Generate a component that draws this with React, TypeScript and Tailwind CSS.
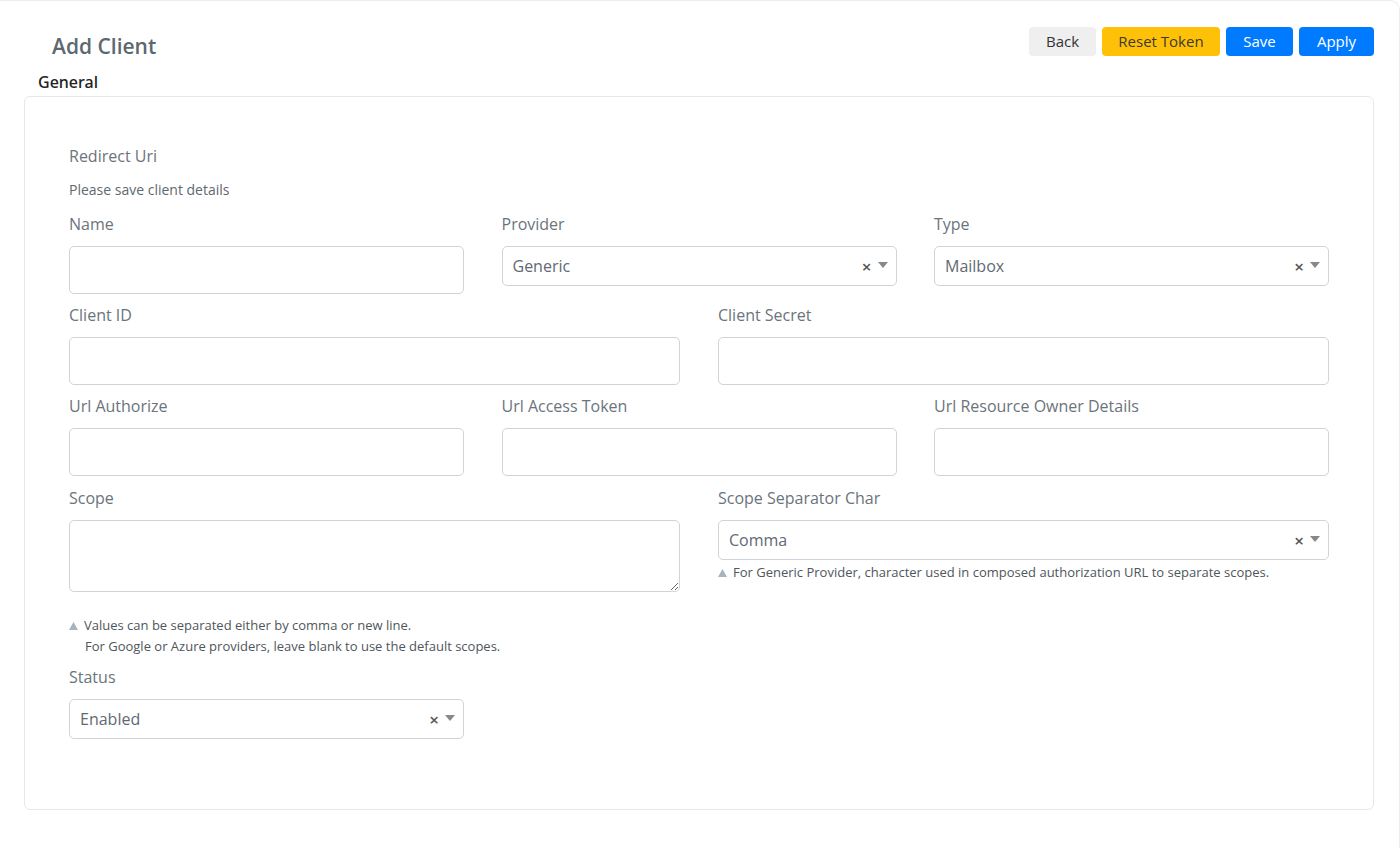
import React from "react";

const font = { fontFamily: '"Open Sans", "Noto Sans", sans-serif' };

function Label({ children }: { children: React.ReactNode }) {
  return <div className="h-[24px] leading-[24px] text-[16px] text-[#6b747c] mb-[10px]">{children}</div>;
}

function Input() {
  return <input className="block w-full h-[48px] border border-[#ced4da] rounded-[5px] bg-white outline-none px-3" />;
}

function Select({ value }: { value: string }) {
  return (
    <div className="flex items-center h-[40px] w-full border border-[#ced4da] rounded-[5px] bg-white pl-[10px] pr-[8px]">
      <span className="flex-1 text-[16px] text-[#5f6a73]">{value}</span>
      <span className="text-[17px] leading-none text-[#555] mr-[6px] font-semibold">×</span>
      <svg width="10" height="6" viewBox="0 0 10 6" className="mb-[3px]">
        <path d="M0 0 L10 0 L5 6 Z" fill="#888" />
      </svg>
    </div>
  );
}

function Tri() {
  return (
    <svg width="9" height="8" viewBox="0 0 9 8" className="inline-block mr-[6px] mb-[1px]">
      <path d="M4.5 0 L9 8 L0 8 Z" fill="#a9b3bb" />
    </svg>
  );
}

export default function App() {
  return (
    <div style={font} className="w-full h-[848px] bg-white border-t border-r border-[#ececec] rounded-tr-[10px] pl-[24px] pr-[25px] overflow-hidden">
      <div className="pt-[26px] flex justify-between h-[60px]">
        <h1 className="pl-[28px] mt-[5px] text-[21px] leading-[28px] font-semibold text-[#5c6870]">Add Client</h1>
        <div className="flex gap-[6px] h-[29px]">
          <button className="h-[29px] w-[67px] rounded-[4px] bg-[#efefef] text-[15px] text-[#333]">Back</button>
          <button className="h-[29px] w-[118px] rounded-[4px] bg-[#ffc107] text-[15px] text-[#3d3a2c]">Reset Token</button>
          <button className="h-[29px] w-[67px] rounded-[4px] bg-[#007bff] text-[15px] text-white">Save</button>
          <button className="h-[29px] w-[75px] rounded-[4px] bg-[#007bff] text-[15px] text-white">Apply</button>
        </div>
      </div>
      <div className="mt-[9px] pl-[14px] h-[24px] leading-[24px] text-[16px] font-semibold text-[#222]" style={{ fontFamily: '"Noto Sans", sans-serif', fontWeight: 500 }}>General</div>
      <div className="mt-[2px] border border-[#e5e7ea] rounded-[6px] pt-[47px] px-[44px] pb-[70px]">
        <div className="h-[24px] leading-[24px] text-[16px] text-[#6b747c]">Redirect Uri</div>
        <div className="mt-[12px] h-[20px] leading-[20px] text-[14px] text-[#5f6870]">Please save client details</div>
        <div className="mt-[12px] grid grid-cols-3 gap-x-[37.5px]">
          <div>
            <Label>Name</Label>
            <Input />
          </div>
          <div>
            <Label>Provider</Label>
            <Select value="Generic" />
          </div>
          <div>
            <Label>Type</Label>
            <Select value="Mailbox" />
          </div>
        </div>
        <div className="mt-[9px] grid grid-cols-2 gap-x-[38px]">
          <div>
            <Label>Client ID</Label>
            <Input />
          </div>
          <div>
            <Label>Client Secret</Label>
            <Input />
          </div>
        </div>
        <div className="mt-[9px] grid grid-cols-3 gap-x-[37.5px]">
          <div>
            <Label>Url Authorize</Label>
            <Input />
          </div>
          <div>
            <Label>Url Access Token</Label>
            <Input />
          </div>
          <div>
            <Label>Url Resource Owner Details</Label>
            <Input />
          </div>
        </div>
        <div className="mt-[10px] grid grid-cols-2 gap-x-[38px]">
          <div>
            <Label>Scope</Label>
            <textarea className="block w-full h-[72px] border border-[#ced4da] rounded-[5px] bg-white outline-none px-3 resize-y" />
            <div className="mt-[23px] text-[13px] leading-[21px] text-[#4f565c]">
              <div><Tri />Values can be separated either by comma or new line.</div>
              <div className="pl-[16px]">For Google or Azure providers, leave blank to use the default scopes.</div>
            </div>
          </div>
          <div>
            <Label>Scope Separator Char</Label>
            <Select value="Comma" />
            <div className="mt-[2px] text-[13px] leading-[20px] text-[#4f565c]">
              <Tri />For Generic Provider, character used in composed authorization URL to separate scopes.
            </div>
          </div>
        </div>
        <div className="mt-[8px] grid grid-cols-3 gap-x-[37.5px]">
          <div>
            <Label>Status</Label>
            <Select value="Enabled" />
          </div>
        </div>
      </div>
    </div>
  );
}
